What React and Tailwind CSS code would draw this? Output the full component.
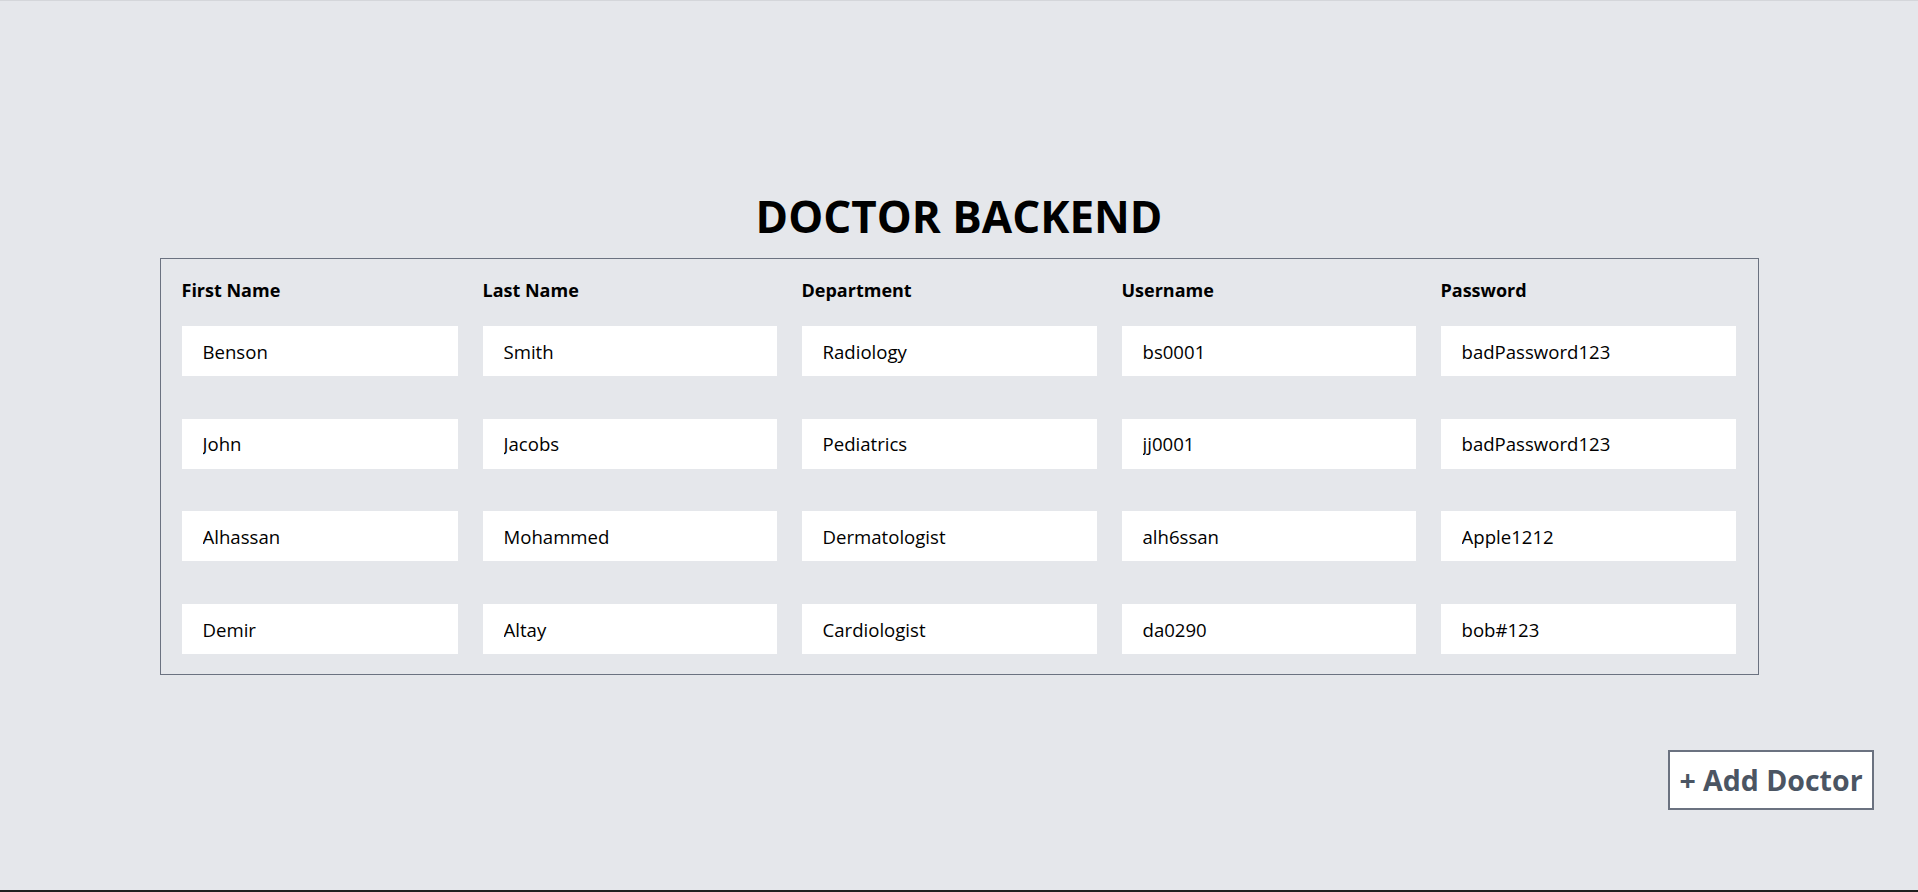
import React from 'react';

const doctors = [
    { first: 'Benson', last: 'Smith', dept: 'Radiology', user: 'bs0001', pass: 'badPassword123' },
    { first: 'John', last: 'Jacobs', dept: 'Pediatrics', user: 'jj0001', pass: 'badPassword123' },
    { first: 'Alhassan', last: 'Mohammed', dept: 'Dermatologist', user: 'alh6ssan', pass: 'Apple1212' },
    { first: 'Demir', last: 'Altay', dept: 'Cardiologist', user: 'da0290', pass: 'bob#123' },
];

const headers = ['First Name', 'Last Name', 'Department', 'Username', 'Password'];

const App = () => {
    return (
        <div
            className="h-[892px] bg-[#e5e7eb] border-t border-[#d4d6da] border-b-2 border-b-[#1f1f1f] overflow-hidden flex flex-col"
            style={{ fontFamily: '"Open Sans", "Noto Sans", sans-serif' }}
        >
            <h1 className="mt-[193px] text-center text-[44px] leading-none font-bold text-black">
                DOCTOR BACKEND
            </h1>

            {/* doctor table */}
            <div className="mx-auto mt-[20px] w-[1599px] border border-[#6b7280] px-[21px] pt-[17px] pb-[20px]">
                <div className="grid grid-cols-[276px_294px_295px_294px_295px] gap-x-[25px]">
                    {headers.map((h) => (
                        <div key={h} className="text-lg leading-7 font-bold text-black">{h}</div>
                    ))}
                </div>
                <div className="mt-[22px] grid grid-cols-[276px_294px_295px_294px_295px] gap-x-[25px] gap-y-[42.7px]">
                    {doctors.map((d) => (
                        <React.Fragment key={d.user}>
                            {[d.first, d.last, d.dept, d.user, d.pass].map((v, i) => (
                                <input
                                    key={i}
                                    readOnly
                                    defaultValue={v}
                                    className="h-[50px] w-full bg-white px-[21px] text-[18.6px] text-black outline-none"
                                />
                            ))}
                        </React.Fragment>
                    ))}
                </div>
            </div>

            <div className="mt-[75px] flex justify-end pr-[44px]">
                <button className="h-[60px] w-[206px] border-2 border-[#6b7280] bg-white text-[28.5px] leading-9 font-bold text-[#4b5563]">
                    + Add Doctor
                </button>
            </div>
        </div>
    );
};

export default App;
